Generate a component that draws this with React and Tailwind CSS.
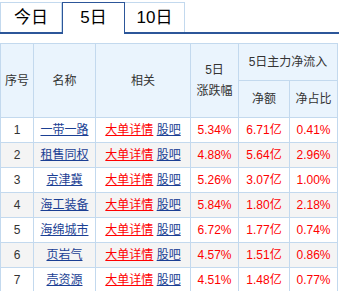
import React from "react";

const rows = [
  ["1", "一带一路", "5.34%", "6.71亿", "0.41%"],
  ["2", "租售同权", "4.88%", "5.64亿", "2.96%"],
  ["3", "京津冀", "5.26%", "3.07亿", "1.00%"],
  ["4", "海工装备", "5.84%", "1.80亿", "2.18%"],
  ["5", "海绵城市", "6.72%", "1.77亿", "0.74%"],
  ["6", "页岩气", "4.57%", "1.51亿", "0.86%"],
  ["7", "壳资源", "4.51%", "1.48亿", "0.77%"],
];

export default function App() {
  return (
    <div className="w-[339px] h-[291px] overflow-hidden bg-white font-['Liberation_Sans','Noto_Sans_CJK_SC',sans-serif]">
      <div className="mt-[2px] flex items-start h-[32px] border-b-2 border-[#2c5699]">
        <div className="w-[62px] h-[30px] border border-b-0 border-[#c3d9ee] flex items-center justify-center text-[17px] leading-none text-black">
          今日
        </div>
        <div className="w-[63px] h-[32px] -mb-[2px] bg-white border border-b-0 border-[#2c5699] flex items-center justify-center text-[17px] leading-none text-black pb-[2px]">
          5日
        </div>
        <div className="w-[60px] h-[30px] border-t border-r border-[#c3d9ee] flex items-center justify-center text-[17px] leading-none text-black">
          10日
        </div>
      </div>
      <table className="mt-[9px] w-[338px] table-fixed border-separate border-spacing-0 border-l border-t border-[#c3d9ee] text-[12px] text-[#333]">
        <colgroup>
          <col className="w-[33px]" />
          <col className="w-[62px]" />
          <col className="w-[95px]" />
          <col className="w-[48px]" />
          <col className="w-[51px]" />
          <col className="w-[48px]" />
        </colgroup>
        <thead>
          <tr>
            <th rowSpan={2} className="font-normal bg-[#eaf4fd] border-r border-b border-[#c3d9ee] p-0 text-center">序号</th>
            <th rowSpan={2} className="font-normal bg-[#eaf4fd] border-r border-b border-[#c3d9ee] p-0 text-center">名称</th>
            <th rowSpan={2} className="font-normal bg-[#eaf4fd] border-r border-b border-[#c3d9ee] p-0 text-center">相关</th>
            <th rowSpan={2} className="font-normal bg-[#eaf4fd] border-r border-b border-[#c3d9ee] p-0 text-center leading-[21px]">
              5日<br />涨跌幅
            </th>
            <th colSpan={2} className="h-[37px] font-normal bg-[#eaf4fd] border-r border-b border-[#c3d9ee] p-0 text-center">5日主力净流入</th>
          </tr>
          <tr>
            <th className="h-[37px] font-normal bg-[#eaf4fd] border-r border-b border-[#c3d9ee] p-0 text-center">净额</th>
            <th className="h-[37px] font-normal bg-[#eaf4fd] border-r border-b border-[#c3d9ee] p-0 text-center">净占比</th>
          </tr>
        </thead>
        <tbody>
          {rows.map((r, i) => {
            const bg = i % 2 === 1 ? "bg-[#f4f4f4]" : "bg-white";
            return (
              <tr key={r[0]} className={bg}>
                <td className="h-[25px] p-0 text-center border-r border-b border-[#c3d9ee] text-[#333]">{r[0]}</td>
                <td className="h-[25px] p-0 text-center border-r border-b border-[#c3d9ee]">
                  <a className="underline text-[#1b3f94]">{r[1]}</a>
                </td>
                <td className="h-[25px] p-0 text-center border-r border-b border-[#c3d9ee] whitespace-nowrap">
                  <a className="underline text-[#ff0000]">大单详情</a>{" "}
                  <a className="underline text-[#1b3f94]">股吧</a>
                </td>
                <td className="h-[25px] p-0 text-center border-r border-b border-[#c3d9ee] text-[#ff0000]">{r[2]}</td>
                <td className="h-[25px] p-0 text-center border-r border-b border-[#c3d9ee] text-[#ff0000]">{r[3]}</td>
                <td className="h-[25px] p-0 text-center border-r border-b border-[#c3d9ee] text-[#ff0000]">{r[4]}</td>
              </tr>
            );
          })}
        </tbody>
      </table>
    </div>
  );
}
